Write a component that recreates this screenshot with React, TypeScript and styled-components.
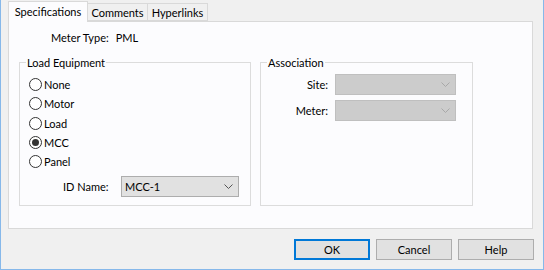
import React from "react";
import styled, { createGlobalStyle } from "styled-components";

const Global = createGlobalStyle`
  html, body { margin: 0; padding: 0; background: #f0f0f0; }
  * { box-sizing: border-box; }
  body { font-family: Lato, "Liberation Sans", sans-serif; font-size: 11px; color: #000; }
`;

const Window = styled.div`
  width: 544px;
  height: 270px;
  background: #f0f0f0;
  border-left: 1px solid #86b8ea;
  border-right: 1px solid #86b8ea;
  border-bottom: 1px solid #86b8ea;
  display: flex;
  flex-direction: column;
`;

const TabStrip = styled.div`
  display: flex;
  align-items: flex-end;
  margin-top: 1px;
  padding-left: 7px;
  height: 21px;
`;

const Tab = styled.div<{ $active?: boolean; $w: number }>`
  width: ${(p) => p.$w}px;
  height: ${(p) => (p.$active ? 21 : 18)}px;
  margin-bottom: ${(p) => (p.$active ? 0 : 1)}px;
  margin-left: ${(p) => (p.$active ? 0 : -1)}px;
  border: 1px solid #d9d9d9;
  border-bottom: ${(p) => (p.$active ? "none" : "1px solid #d9d9d9")};
  background: ${(p) => (p.$active ? "#fcfcfe" : "#f0f0f0")};
  position: relative;
  z-index: ${(p) => (p.$active ? 2 : 1)};
  display: flex;
  align-items: ${(p) => (p.$active ? "flex-start" : "center")};
  justify-content: center;
  white-space: nowrap;
  line-height: 15px;
  padding-top: ${(p) => (p.$active ? 2 : 0)}px;
  &:first-child { margin-left: 0; }
`;

const Panel = styled.div`
  margin-left: 7px;
  margin-top: -1px;
  width: 525px;
  height: 208px;
  border: 1px solid #d9d9d9;
  background: #fcfcfe;
  display: flex;
  flex-direction: column;
`;

const MeterRow = styled.div`
  margin-top: 8px;
  padding-left: 42px;
  line-height: 15px;
  display: flex;
  gap: 7px;
`;

const Groups = styled.div`
  display: flex;
  gap: 9px;
  margin-top: 17px;
  padding-left: 10px;
`;

const Group = styled.div<{ $w: number }>`
  position: relative;
  width: ${(p) => p.$w}px;
  height: 144px;
  border: 1px solid #dcdcdc;
`;

const Legend = styled.div`
  position: absolute;
  top: -8px;
  left: 6px;
  padding: 0 1px;
  line-height: 15px;
  background: #fcfcfe;
`;

const RadioList = styled.div`
  display: flex;
  flex-direction: column;
  padding-top: 12px;
  padding-left: 9px;
`;

const RadioRow = styled.div`
  height: 19.25px;
  display: flex;
  align-items: center;
  gap: 2px;
  line-height: 15px;
`;

const Circle = styled.span<{ $on?: boolean }>`
  width: 13px;
  height: 13px;
  border-radius: 50%;
  border: 1px solid #333;
  background: #fff;
  display: inline-flex;
  align-items: center;
  justify-content: center;
  &::after {
    content: "";
    width: 7px;
    height: 7px;
    border-radius: 50%;
    background: ${(p) => (p.$on ? "#333" : "transparent")};
  }
`;

const IdRow = styled.div`
  display: grid;
  grid-template-columns: 58px 118px;
  align-items: center;
  margin-top: 5px;
  padding-left: 43px;
  line-height: 15px;
`;

const Select = styled.div<{ $disabled?: boolean; $w: number }>`
  width: ${(p) => p.$w}px;
  height: 21px;
  border: 1px solid ${(p) => (p.$disabled ? "#bfbfbf" : "#adadad")};
  background: ${(p) => (p.$disabled ? "#cccccc" : "#e1e1e1")};
  display: flex;
  align-items: center;
  justify-content: space-between;
  padding: 0 5px 0 3px;
  line-height: 15px;
`;

const Chevron = ({ color }: { color: string }) => (
  <svg width="9" height="5" viewBox="0 0 9 5">
    <polyline points="0.5,0.5 4.5,4.5 8.5,0.5" fill="none" stroke={color} strokeWidth="1" />
  </svg>
);

const AssocGrid = styled.div`
  display: grid;
  grid-template-columns: 67px 121px;
  column-gap: 7px;
  row-gap: 5px;
  padding-top: 11px;
  align-items: center;
  line-height: 15px;
`;

const RightLabel = styled.span`
  text-align: right;
`;

const Buttons = styled.div`
  display: flex;
  justify-content: flex-end;
  gap: 6px;
  margin-top: 10px;
  padding-right: 9px;
`;

const Button = styled.div<{ $default?: boolean }>`
  width: 76px;
  height: 21px;
  background: #e1e1e1;
  border: ${(p) => (p.$default ? "2px solid #0078d7" : "1px solid #adadad")};
  display: flex;
  align-items: center;
  justify-content: center;
  line-height: 15px;
`;

const radios = ["None", "Motor", "Load", "MCC", "Panel"];

export default function App() {
  return (
    <>
      <Global />
      <Window>
        <TabStrip>
          <Tab $active $w={80}>Specifications</Tab>
          <Tab $w={61}>Comments</Tab>
          <Tab $w={61}>Hyperlinks</Tab>
        </TabStrip>
        <Panel>
          <MeterRow>
            <span>Meter Type:</span>
            <span>PML</span>
          </MeterRow>
          <Groups>
            <Group $w={232}>
              <Legend>Load Equipment</Legend>
              <RadioList>
                {radios.map((r) => (
                  <RadioRow key={r}>
                    <Circle $on={r === "MCC"} />
                    <span>{r}</span>
                  </RadioRow>
                ))}
              </RadioList>
              <IdRow>
                <span>ID Name:</span>
                <Select $w={118}>
                  <span>MCC-1</span>
                  <Chevron color="#555" />
                </Select>
              </IdRow>
            </Group>
            <Group $w={213}>
              <Legend>Association</Legend>
              <AssocGrid>
                <RightLabel>Site:</RightLabel>
                <Select $disabled $w={121}>
                  <span />
                  <Chevron color="#a8a8a8" />
                </Select>
                <RightLabel>Meter:</RightLabel>
                <Select $disabled $w={121}>
                  <span />
                  <Chevron color="#a8a8a8" />
                </Select>
              </AssocGrid>
            </Group>
          </Groups>
        </Panel>
        <Buttons>
          <Button $default>OK</Button>
          <Button>Cancel</Button>
          <Button>Help</Button>
        </Buttons>
      </Window>
    </>
  );
}
